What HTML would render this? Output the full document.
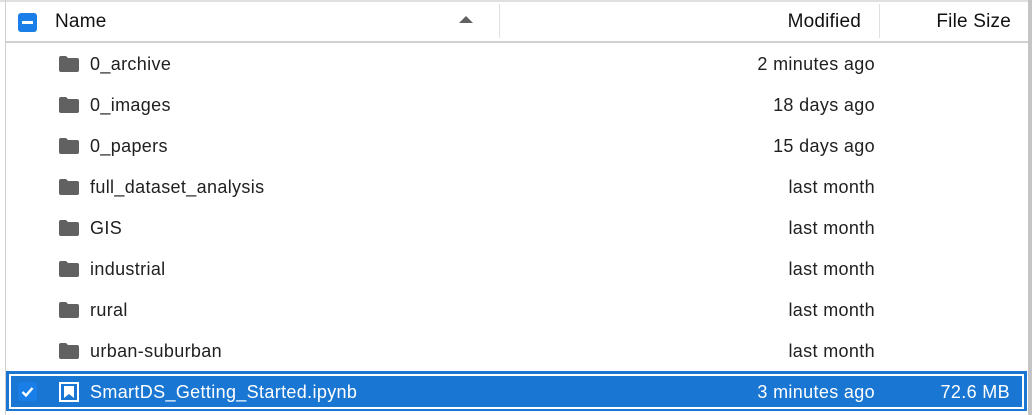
<!DOCTYPE html>
<html><head><style>
body{margin:0;width:1032px;height:415px;background:#fff;position:relative;overflow:hidden;font-family:"Liberation Sans",sans-serif;color:#212121}
.bt{position:absolute;left:0;top:0;width:1032px;height:2px;background:#e0e0e0}
.bl{position:absolute;left:5px;top:0;width:1px;height:415px;background:#cfcfcf}
.br{position:absolute;left:1028px;top:0;width:4px;height:415px;background:#c4c4c4}
.hb{position:absolute;left:6px;top:41px;width:1022px;height:2px;background:#d0d0d0}
.t{position:absolute;font-size:18px;line-height:24px;white-space:nowrap;letter-spacing:0.35px}
.h{font-size:19px;letter-spacing:0.2px;color:#111}
.r{text-align:right}
.fold{position:absolute;left:59px;width:20px;height:16px}
.div{position:absolute;top:4px;width:1px;height:34px;background:#e0e0e0}
</style></head><body>
<div class="bt"></div><div class="bl"></div><div class="br"></div>
<div style="position:absolute;left:18px;top:13px;width:19px;height:19px;background:#1a7ee8;border-radius:3px"><div style="position:absolute;left:4px;top:8px;width:11px;height:3px;background:#fff"></div></div>
<div class="t h" style="left:55px;top:10px">Name</div>
<div style="position:absolute;left:459px;top:16px;width:0;height:0;border-left:7px solid transparent;border-right:7px solid transparent;border-bottom:7px solid #616161"></div>
<div class="div" style="left:499px"></div><div class="div" style="left:879px"></div>
<div class="t r h" style="right:171px;top:10px">Modified</div>
<div class="t r h" style="right:21px;top:10px">File Size</div>
<div class="hb"></div>

<div class="fold" style="top:56px"><svg width="20" height="16"><path d="M0 2a2 2 0 0 1 2-2h5l2 2h9a2 2 0 0 1 2 2v10a2 2 0 0 1-2 2H2a2 2 0 0 1-2-2z" fill="#616161"/></svg></div>
<div class="t" style="left:90px;top:52px">0_archive</div><div class="t r" style="right:157px;top:52px">2 minutes ago</div>
<div class="fold" style="top:97px"><svg width="20" height="16"><path d="M0 2a2 2 0 0 1 2-2h5l2 2h9a2 2 0 0 1 2 2v10a2 2 0 0 1-2 2H2a2 2 0 0 1-2-2z" fill="#616161"/></svg></div>
<div class="t" style="left:90px;top:93px">0_images</div><div class="t r" style="right:157px;top:93px">18 days ago</div>
<div class="fold" style="top:138px"><svg width="20" height="16"><path d="M0 2a2 2 0 0 1 2-2h5l2 2h9a2 2 0 0 1 2 2v10a2 2 0 0 1-2 2H2a2 2 0 0 1-2-2z" fill="#616161"/></svg></div>
<div class="t" style="left:90px;top:134px">0_papers</div><div class="t r" style="right:157px;top:134px">15 days ago</div>
<div class="fold" style="top:179px"><svg width="20" height="16"><path d="M0 2a2 2 0 0 1 2-2h5l2 2h9a2 2 0 0 1 2 2v10a2 2 0 0 1-2 2H2a2 2 0 0 1-2-2z" fill="#616161"/></svg></div>
<div class="t" style="left:90px;top:175px">full_dataset_analysis</div><div class="t r" style="right:157px;top:175px">last month</div>
<div class="fold" style="top:220px"><svg width="20" height="16"><path d="M0 2a2 2 0 0 1 2-2h5l2 2h9a2 2 0 0 1 2 2v10a2 2 0 0 1-2 2H2a2 2 0 0 1-2-2z" fill="#616161"/></svg></div>
<div class="t" style="left:90px;top:216px">GIS</div><div class="t r" style="right:157px;top:216px">last month</div>
<div class="fold" style="top:261px"><svg width="20" height="16"><path d="M0 2a2 2 0 0 1 2-2h5l2 2h9a2 2 0 0 1 2 2v10a2 2 0 0 1-2 2H2a2 2 0 0 1-2-2z" fill="#616161"/></svg></div>
<div class="t" style="left:90px;top:257px">industrial</div><div class="t r" style="right:157px;top:257px">last month</div>
<div class="fold" style="top:302px"><svg width="20" height="16"><path d="M0 2a2 2 0 0 1 2-2h5l2 2h9a2 2 0 0 1 2 2v10a2 2 0 0 1-2 2H2a2 2 0 0 1-2-2z" fill="#616161"/></svg></div>
<div class="t" style="left:90px;top:298px">rural</div><div class="t r" style="right:157px;top:298px">last month</div>
<div class="fold" style="top:343px"><svg width="20" height="16"><path d="M0 2a2 2 0 0 1 2-2h5l2 2h9a2 2 0 0 1 2 2v10a2 2 0 0 1-2 2H2a2 2 0 0 1-2-2z" fill="#616161"/></svg></div>
<div class="t" style="left:90px;top:339px">urban-suburban</div><div class="t r" style="right:157px;top:339px">last month</div>

<div style="position:absolute;left:6px;top:371px;width:1021px;height:40px;background:#1976d2"></div>
<div style="position:absolute;left:9px;top:374px;width:1011px;height:31px;border:2px solid #fff"></div>
<div style="position:absolute;left:11px;top:376px;width:1011px;height:31px;background:#1976d2"></div>
<div style="position:absolute;left:18px;top:382px;width:19px;height:19px;background:#1a7ee8;border-radius:3px"><svg width="19" height="19"><path d="M4.5 10l3.5 3.5 6.5-7.5" stroke="#fff" stroke-width="2.4" fill="none"/></svg></div>
<div style="position:absolute;left:59px;top:382px"><svg width="20" height="20"><rect x="1" y="1" width="18" height="18" fill="none" stroke="#fff" stroke-width="2"/><path d="M5 4h10v12l-5-4-5 4z" fill="#fff"/></svg></div>
<div class="t" style="left:90px;top:380px;color:#fff">SmartDS_Getting_Started.ipynb</div>
<div class="t r" style="right:157px;top:380px;color:#fff">3 minutes ago</div>
<div class="t r" style="right:22px;top:380px;color:#fff">72.6 MB</div>
</body></html>
